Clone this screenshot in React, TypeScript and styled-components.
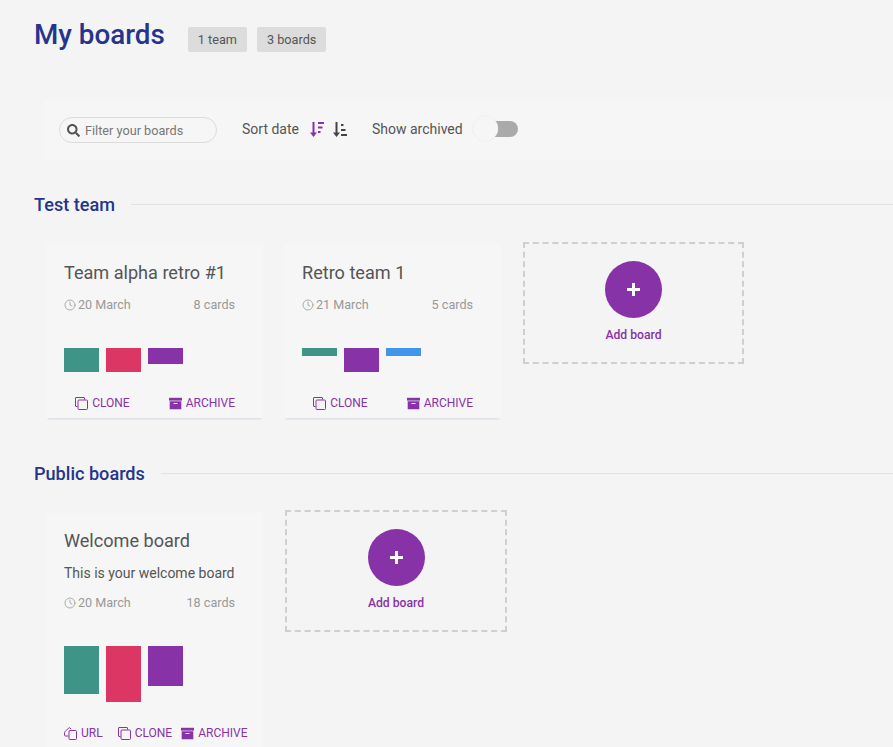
import { Clock } from "lucide-react";
import { FaSearch } from "react-icons/fa";
import styled, { createGlobalStyle } from "styled-components";

const GlobalStyle = createGlobalStyle`
  html, body {
    margin: 0;
    height: 100%;
    overflow: hidden;
    background: #f4f4f5;
  }
`;

const Page = styled.div`
  width: 893px;
  height: 747px;
  overflow: hidden;
  font-family: Roboto, "Liberation Sans", sans-serif;
  color: #555;
`;

const Header = styled.header`
  display: flex;
  align-items: center;
  height: 40px;
  padding: 14px 0 0 34px;
`;

const Title = styled.h1`
  margin: 0 23px 0 0;
  font-size: 27.8px;
  font-weight: 500;
  color: #26348c;
`;

const Chip = styled.span`
  display: flex;
  align-items: center;
  height: 25px;
  padding: 0 10px;
  margin: 10px 10px 0 0;
  border-radius: 2px;
  background: #dcdcdc;
  font-size: 12.7px;
  color: #555;
`;

const Toolbar = styled.div`
  display: flex;
  align-items: center;
  box-sizing: border-box;
  height: 60px;
  margin: 46px 0 0 44px;
  padding: 0 0 2px 15px;
  background: #f6f6f7;
  font-size: 14px;
`;

const Search = styled.div`
  display: flex;
  align-items: center;
  gap: 5px;
  box-sizing: border-box;
  width: 158px;
  height: 26px;
  padding: 1px 7px 0;
  margin: 2px 25px 0 0;
  border: 1px solid #dcdcdc;
  border-radius: 13px;
  font-size: 12.7px;
  color: #777;

  svg {
    color: #555;
  }
`;

const SortLabel = styled.span`
  margin-right: 11px;
`;

const SortIcon = styled.svg<{ $active?: boolean }>`
  width: 14px;
  height: 15px;
  margin-right: 9px;
  fill: ${(p) => (p.$active ? "#8832a8" : "#444")};
`;

const ArchivedLabel = styled.span`
  margin: 0 10px 0 16px;
`;

const Toggle = styled.div`
  position: relative;
  width: 45px;
  height: 16px;
  border-radius: 8px;
  background: #aaaaaa;
`;

const Knob = styled.div`
  position: absolute;
  left: 0;
  top: -5px;
  width: 25px;
  height: 25px;
  border-radius: 50%;
  background: #f6f6f7;
  box-shadow: 0 0 1px #ddd;
`;

const Section = styled.section<{ $top: number }>`
  margin-top: ${(p) => p.$top}px;
`;

const SectionHead = styled.div`
  display: flex;
  align-items: center;
  gap: 16px;
  height: 24px;
  padding-left: 34px;
`;

const SectionTitle = styled.h2`
  margin: 0;
  font-size: 18.1px;
  font-weight: 500;
  color: #26348c;
`;

const Rule = styled.div`
  flex: 1;
  height: 1px;
  background: #e2e2e4;
`;

const Row = styled.div<{ $top: number }>`
  display: flex;
  align-items: flex-start;
  gap: 21px;
  margin: ${(p) => p.$top}px 0 0 46px;
`;

const Card = styled.article`
  display: flex;
  flex-direction: column;
  box-sizing: border-box;
  width: 217px;
  padding: 16px 28px 0 18px;
  background: #f6f6f7;
  box-shadow: 0 3px 2px -2px rgba(120, 125, 160, 0.25);
`;

const CardTitle = styled.h3`
  margin: 0;
  font-size: 18.1px;
  line-height: 24px;
  font-weight: 400;
  color: #555;
`;

const Description = styled.p`
  margin: 10px 0 0;
  font-size: 14px;
  line-height: 20px;
  color: #555;
`;

const Meta = styled.div`
  display: flex;
  justify-content: space-between;
  margin-top: 12px;
  font-size: 12.6px;
  line-height: 16px;
  color: #999;
`;

const DateText = styled.span`
  display: flex;
  align-items: center;
  gap: 2px;
`;

const Bars = styled.div<{ $height: number }>`
  display: flex;
  align-items: flex-start;
  gap: 7px;
  height: ${(p) => p.$height}px;
  margin-top: 35px;
`;

const Bar = styled.div<{ $color: string; $height: number }>`
  width: 35px;
  height: ${(p) => p.$height}px;
  background: ${(p) => p.$color};
`;

const Actions = styled.div<{ $tight?: boolean }>`
  display: flex;
  justify-content: ${(p) => (p.$tight ? "flex-start" : "flex-end")};
  gap: ${(p) => (p.$tight ? "9px" : "39px")};
  height: 25px;
  margin: ${(p) => (p.$tight ? "21px -12px 0 0" : "21px 0 0")};

  & > :first-child {
    margin-right: ${(p) => (p.$tight ? "6px" : "0")};
  }
`;

const ActionLink = styled.span`
  display: flex;
  align-items: center;
  align-self: flex-start;
  gap: 4px;
  height: 20px;
  font-size: 12px;
  color: #8832a8;

  svg {
    width: 13px;
    height: 13px;
    flex: none;
  }
`;

const AddBoard = styled.button<{ $width: number }>`
  display: flex;
  flex-direction: column;
  align-items: center;
  box-sizing: border-box;
  width: ${(p) => p.$width}px;
  height: 122px;
  margin: -3px 0 0 1px;
  padding: 17px 0 0;
  border: 2px dashed #cfcfd1;
  background: none;
  font-family: inherit;
  font-size: 12.2px;
  font-weight: 500;
  color: #8832a8;
`;

const AddCircle = styled.span`
  display: flex;
  align-items: center;
  justify-content: center;
  width: 57px;
  height: 57px;
  margin-bottom: 10px;
  border-radius: 50%;
  background: #8832a8;

  svg {
    width: 13px;
    height: 13px;
    fill: #fff;
  }
`;

const CloneIcon = () => (
  <svg viewBox="0 0 13 13" fill="none" stroke="currentColor" strokeWidth="1">
    <path d="M2.5 9.5h-1.500a.5.5 0 0 1-.5-.5V1a.5.5 0 0 1 .5-.5h8a.5.5 0 0 1 .5.500v1.500" />
    <rect x="3" y="3" width="9.500" height="9.500" rx="1" />
  </svg>
);

const ArchiveIcon = () => (
  <svg viewBox="0 0 13 13" fill="currentColor">
    <path d="M0 .8h13v2.800H0z" />
    <path d="M.7 4.300h11.600v8H.7zM4.500 6v1h4V6z" fillRule="evenodd" />
  </svg>
);

const UrlIcon = () => (
  <svg viewBox="0 0 13 13" fill="none" stroke="currentColor" strokeWidth="1">
    <path d="M4.500 9H1.500a1 1 0 0 1-1-1V5.500a1 1 0 0 1 .3-.7L4.600 1a1 1 0 0 1 1.400 0l1.200 1.200" />
    <rect x="5" y="3.500" width="7.500" height="9" rx="1" />
  </svg>
);

const PlusIcon = () => (
  <svg viewBox="0 0 13 13">
    <path d="M5 0h3v5h5v3H8v5H5V8H0V5h5z" />
  </svg>
);

type BoardAction = { label: string; icon: React.ReactNode };

const clone: BoardAction = { label: "CLONE", icon: <CloneIcon /> };
const archive: BoardAction = { label: "ARCHIVE", icon: <ArchiveIcon /> };
const url: BoardAction = { label: "URL", icon: <UrlIcon /> };

const TEAL = "#3f9488";
const PINK = "#dc3664";
const PURPLE = "#8832a8";
const BLUE = "#4296ea";

type BoardProps = {
  title: string;
  description?: string;
  date: string;
  cards: string;
  bars: [string, number][];
  actions: BoardAction[];
};

function Board({ title, description, date, cards, bars, actions }: BoardProps) {
  return (
    <Card>
      <CardTitle>{title}</CardTitle>
      {description && <Description>{description}</Description>}
      <Meta>
        <DateText>
          <Clock size={12} strokeWidth={1.6} />
          {date}
        </DateText>
        <span>{cards}</span>
      </Meta>
      <Bars $height={Math.max(...bars.map((b) => b[1]))}>
        {bars.map(([color, height], i) => (
          <Bar key={i} $color={color} $height={height} />
        ))}
      </Bars>
      <Actions $tight={actions.length > 2}>
        {actions.map((a) => (
          <ActionLink key={a.label}>
            {a.icon}
            {a.label}
          </ActionLink>
        ))}
      </Actions>
    </Card>
  );
}

export default function App() {
  return (
    <Page>
      <GlobalStyle />
      <Header>
        <Title>My boards</Title>
        <Chip>1 team</Chip>
        <Chip>3 boards</Chip>
      </Header>

      <Toolbar>
        <Search>
          <FaSearch size={13} />
          Filter your boards
        </Search>
        <SortLabel>Sort date</SortLabel>
        <SortIcon $active viewBox="0 0 14 15">
          <path d="M2.500 0h2v10.500H7L3.500 15 0 10.500h2.500zM8 0h6v2H8zM8 4.500h4.500v2H8zM8 9h2.500v2H8z" />
        </SortIcon>
        <SortIcon viewBox="0 0 14 15">
          <path d="M2.500 0h2v10.500H7L3.500 15 0 10.500h2.500zM8 2h2.500v2H8zM8 7h4.500v2H8zM8 12h6v2H8z" />
        </SortIcon>
        <ArchivedLabel>Show archived</ArchivedLabel>
        <Toggle>
          <Knob />
        </Toggle>
      </Toolbar>

      <Section $top={32}>
        <SectionHead>
          <SectionTitle>Test team</SectionTitle>
          <Rule />
        </SectionHead>
        <Row $top={29}>
          <Board
            title="Team alpha retro #1"
            date="20 March"
            cards="8 cards"
            bars={[
              [TEAL, 24],
              [PINK, 24],
              [PURPLE, 16],
            ]}
            actions={[clone, archive]}
          />
          <Board
            title="Retro team 1"
            date="21 March"
            cards="5 cards"
            bars={[
              [TEAL, 8],
              [PURPLE, 24],
              [BLUE, 8],
            ]}
            actions={[clone, archive]}
          />
          <AddBoard $width={221}>
            <AddCircle>
              <PlusIcon />
            </AddCircle>
            Add board
          </AddBoard>
        </Row>
      </Section>

      <Section $top={43}>
        <SectionHead>
          <SectionTitle>Public boards</SectionTitle>
          <Rule />
        </SectionHead>
        <Row $top={28}>
          <Board
            title="Welcome board"
            description="This is your welcome board"
            date="20 March"
            cards="18 cards"
            bars={[
              [TEAL, 48],
              [PINK, 56],
              [PURPLE, 40],
            ]}
            actions={[url, clone, archive]}
          />
          <AddBoard $width={222}>
            <AddCircle>
              <PlusIcon />
            </AddCircle>
            Add board
          </AddBoard>
        </Row>
      </Section>
    </Page>
  );
}
